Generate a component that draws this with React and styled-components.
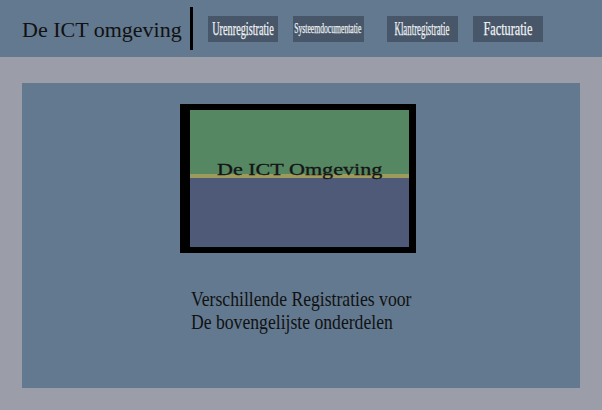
import styled, { createGlobalStyle } from 'styled-components'

const GlobalStyle = createGlobalStyle`
  html, body {
    margin: 0;
    padding: 0;
    background: #9b9ea8;
  }
  body {
    font-family: "Liberation Serif", serif;
    color: #111;
  }
`

const Header = styled.header`
  height: 57px;
  background: #627990;
  display: flex;
  align-items: center;
  padding-left: 22px;
`

const Title = styled.h1`
  margin: 0;
  font-size: 22px;
  font-weight: normal;
  line-height: 1;
  margin-top: 2px;
`

const Divider = styled.div`
  width: 3px;
  height: 43px;
  background: #000;
  margin-left: 8px;
  margin-right: 15px;
`

const Nav = styled.nav`
  display: flex;
  align-items: center;
`

const NavButton = styled.a`
  display: flex;
  align-items: center;
  justify-content: center;
  width: ${(p) => p.width}px;
  height: 26px;
  margin-left: ${(p) => p.gap || 0}px;
  background: #475769;
  color: #f0f2f4;
  text-decoration: none;
  font-size: ${(p) => p.size}px;
  line-height: 1;
  white-space: nowrap;
  overflow: hidden;
  -webkit-text-stroke: 0.25px #f0f2f4;
  span {
    display: inline-block;
    transform: scaleX(${(p) => p.squeeze});
  }
`

const Panel = styled.main`
  margin: 26px 22px 0;
  height: 305px;
  background: #627990;
  display: flex;
  flex-direction: column;
  align-items: center;
  padding-top: 21px;
  box-sizing: border-box;
`

const Picture = styled.div`
  width: 219px;
  border-style: solid;
  border-color: #000;
  border-width: 6px 7px 6px 10px;
  display: flex;
  flex-direction: column;
  margin-left: -6px;
`

const Band = styled.div`
  height: ${(p) => p.h}px;
  background: ${(p) => p.bg};
  display: flex;
  flex-direction: column;
  justify-content: flex-end;
  align-items: center;
`

const PictureText = styled.div`
  position: relative;
  z-index: 1;
  font-size: 17px;
  line-height: 17px;
  margin-bottom: -4px;
  transform: scaleX(1.3);
  white-space: nowrap;
  color: #151515;
  -webkit-text-stroke: 0.3px #151515;
`

const Blurb = styled.p`
  margin: 35px 0 0;
  font-size: 21px;
  line-height: 23px;
  text-align: left;
  width: 220px;
  white-space: nowrap;
  span {
    display: inline-block;
    transform-origin: left center;
    transform: scaleX(0.84);
  }
`

const links = [
  { label: 'Urenregistratie', width: 70, size: 18, squeeze: 0.57, gap: 0 },
  { label: 'Systeemdocumentatie', width: 71, size: 15, squeeze: 0.51, gap: 15 },
  { label: 'Klantregistratie', width: 71, size: 18, squeeze: 0.49, gap: 23 },
  { label: 'Facturatie', width: 70, size: 18, squeeze: 0.68, gap: 15 },
]

export default function App() {
  return (
    <>
      <GlobalStyle />
      <Header>
        <Title>De ICT omgeving</Title>
        <Divider />
        <Nav>
          {links.map((l) => (
            <NavButton key={l.label} href="#" width={l.width} size={l.size} squeeze={l.squeeze} gap={l.gap}>
              <span>{l.label}</span>
            </NavButton>
          ))}
        </Nav>
      </Header>
      <Panel>
        <Picture>
          <Band h={64} bg="#558862">
            <PictureText>De ICT Omgeving</PictureText>
          </Band>
          <Band h={4} bg="#9d9b5c" />
          <Band h={69} bg="#4f5a78" />
        </Picture>
        <Blurb>
          <span>Verschillende Registraties voor</span>
          <br />
          <span>De bovengelijste onderdelen</span>
        </Blurb>
      </Panel>
    </>
  )
}
